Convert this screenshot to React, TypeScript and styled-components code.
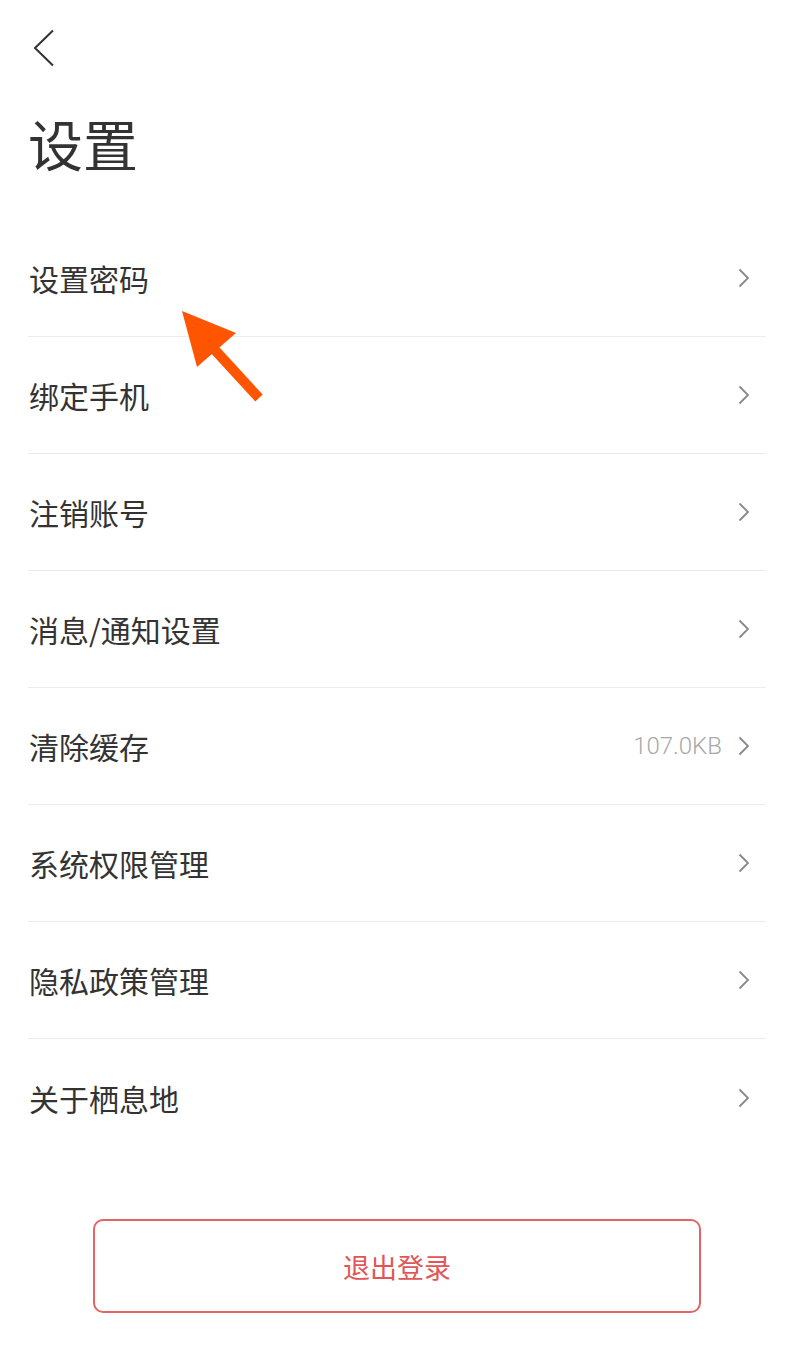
import styled, { createGlobalStyle } from "styled-components";

const GlobalStyle = createGlobalStyle`
  html, body {
    margin: 0;
    padding: 0;
    background: #ffffff;
  }
  body {
    font-family: "Noto Sans CJK SC", "Noto Sans", sans-serif;
    color: #333333;
  }
`;

const items = [
  { label: "设置密码" },
  { label: "绑定手机" },
  { label: "注销账号" },
  { label: "消息/通知设置" },
  { label: "清除缓存", value: "107.0KB" },
  { label: "系统权限管理" },
  { label: "隐私政策管理" },
  { label: "关于栖息地" },
];

const Page = styled.div`
  position: relative;
  width: 793px;
  min-height: 1360px;
  box-sizing: border-box;
  padding: 0 27px 0 28px;
  background: #fff;
`;

const TopBar = styled.div`
  height: 96px;
  display: flex;
  align-items: center;
`;

const BackButton = styled.button`
  border: 0;
  background: none;
  padding: 0;
  margin-left: 4px;
  width: 24px;
  height: 40px;
  display: flex;
  align-items: center;
  cursor: pointer;
`;

const Title = styled.h1`
  margin: 0;
  height: 124px;
  font-size: 55px;
  font-weight: 400;
  line-height: 92px;
  color: #333;
`;

const List = styled.ul`
  list-style: none;
  margin: 0;
  padding: 0;
`;

const Row = styled.li<{ $last?: boolean }>`
  height: 117px;
  box-sizing: border-box;
  display: flex;
  align-items: center;
  padding-right: 16px;
  border-bottom: ${(p) => (p.$last ? "none" : "1px solid #ececec")};
`;

const Label = styled.span`
  flex: 1;
  font-size: 30px;
  color: #333;
  padding-left: 1px;
`;

const Value = styled.span`
  font-family: Roboto, "Noto Sans", sans-serif;
  font-weight: 300;
  font-size: 24px;
  color: #a8a8a8;
  margin-right: 16px;
`;

const Chevron = () => (
  <svg width="12" height="20" viewBox="0 0 12 20" fill="none">
    <path d="M1.5 1.5 L10 10 L1.5 18.5" stroke="#888" strokeWidth="1.8" />
  </svg>
);

const Footer = styled.div`
  padding: 63px 65px 0 65px;
`;

const LogoutButton = styled.button`
  width: 100%;
  height: 94px;
  border: 2px solid #e36464;
  border-radius: 10px;
  background: #fff;
  color: #e25555;
  font-family: "Noto Sans CJK SC", sans-serif;
  font-size: 27px;
  cursor: pointer;
`;

const Pointer = styled.svg`
  position: absolute;
  left: 176px;
  top: 305px;
`;

export default function App() {
  return (
    <>
      <GlobalStyle />
      <Page>
        <TopBar>
          <BackButton aria-label="返回">
            <svg width="24" height="40" viewBox="0 0 24 40" fill="none">
              <path d="M21 2.5 L3 20 L21 37.5" stroke="#333" strokeWidth="2" />
            </svg>
          </BackButton>
        </TopBar>
        <Title>设置</Title>
        <List>
          {items.map((it, i) => (
            <Row key={it.label} $last={i === items.length - 1}>
              <Label>{it.label}</Label>
              {it.value && <Value>{it.value}</Value>}
              <Chevron />
            </Row>
          ))}
        </List>
        <Footer>
          <LogoutButton>退出登录</LogoutButton>
        </Footer>
        <Pointer width="92" height="100" viewBox="0 0 92 100">
          <polygon points="6,6 60,28 21,62" fill="#ff5500" />
          <line x1="38" y1="44" x2="83" y2="93" stroke="#ff5500" strokeWidth="10" />
        </Pointer>
      </Page>
    </>
  );
}
